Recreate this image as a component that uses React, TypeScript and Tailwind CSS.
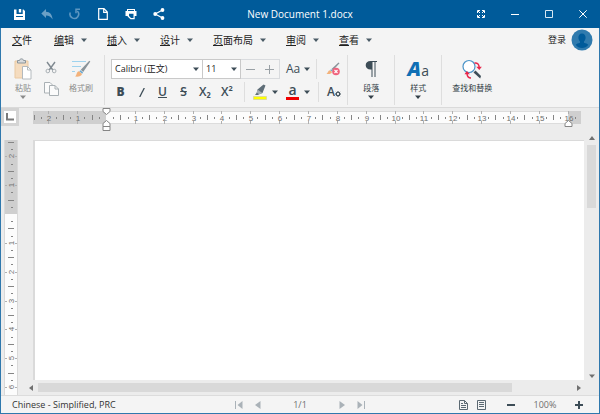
import React, { useLayoutEffect, useRef, useState } from "react";
import clsx from "clsx";

const CM = 28.85;

const MENUS = ["编辑", "插入", "设计", "页面布局", "审阅", "查看"];

interface IconButtonProps {
  label: string;
  className?: string;
  children: React.ReactNode;
}

function IconButton({ label, className, children }: IconButtonProps) {
  return (
    <button
      type="button"
      aria-label={label}
      className={clsx("flex shrink-0 items-center justify-center", className)}
    >
      {children}
    </button>
  );
}

function Caret({ className }: { className?: string }) {
  return (
    <svg
      width="6"
      height="4"
      viewBox="0 0 6 4"
      aria-hidden="true"
      className={clsx("shrink-0", className)}
    >
      <path d="M0 0.500h6L3 4z" fill="currentColor" />
    </svg>
  );
}

function Separator({ className }: { className?: string }) {
  return <div className={clsx("w-px shrink-0 bg-[#dedede]", className)} />;
}

function TitleBar() {
  return (
    <header className="grid h-7 shrink-0 grid-cols-[1fr_auto_1fr] items-center bg-[#005b9a] text-white">
      <div className="flex pl-[5px]">
        <IconButton label="保存" className="h-7 w-7">
          <svg width="11" height="11" viewBox="0 0 11 11">
            <path
              fill="#fff"
              fillRule="evenodd"
              d="M0 0.500h2.500v4.500h6.200V0.500H9.500L11 2v9H0zM4.800 0h2.400v3.600H4.800zM2 7v1h7V7z"
            />
          </svg>
        </IconButton>
        <IconButton label="撤销" className="h-7 w-7">
          <svg width="12" height="11" viewBox="0 0 12 11">
            <path
              fill="#6ba0c6"
              d="M5 0v2.700c4 0.200 6.300 2.800 6.600 7.800C10 7.600 8 6.500 5 6.400V9L0.300 4.500z"
            />
          </svg>
        </IconButton>
        <IconButton label="恢复" className="h-7 w-7">
          <svg width="12" height="12" viewBox="0 0 12 12" fill="none">
            <path
              stroke="#5d97c1"
              strokeWidth="1.600"
              d="M1.300 4.500a4.300 4.300 0 1 0 7-1.500"
            />
            <path stroke="#5d97c1" strokeWidth="1.500" d="M11 1.200H7v4" />
          </svg>
        </IconButton>
        <IconButton label="新建" className="h-7 w-7">
          <svg width="10" height="12" viewBox="0 0 10 12" fill="none">
            <path
              stroke="#fff"
              strokeWidth="1.200"
              d="M.7.700h5.300L9.300 4v7.300H.7zM5.700.700V4.300h3.600"
            />
          </svg>
        </IconButton>
        <IconButton label="打印" className="h-7 w-7">
          <svg width="12" height="12" viewBox="0 0 12 12">
            <path
              fill="#fff"
              fillRule="evenodd"
              d="M2 1h8v2h1.500v5H9.700v3.300H5.500L2.600 8.500V8H.5V3H2zM3 2v1h6V2zM4 5.800V8l2 2h2.500V5.800z"
            />
          </svg>
        </IconButton>
        <IconButton label="共享" className="h-7 w-7">
          <svg width="12" height="12" viewBox="0 0 12 12">
            <path stroke="#fff" strokeWidth="1.200" fill="none" d="M9.500 2L2.200 6l7.300 4" />
            <circle cx="9.500" cy="2" r="1.900" fill="#fff" />
            <circle cx="2.200" cy="6" r="1.900" fill="#fff" />
            <circle cx="9.500" cy="10" r="1.900" fill="#fff" />
          </svg>
        </IconButton>
      </div>
      <h1 className="text-[10px]">New Document 1.docx</h1>
      <div className="flex justify-end">
        <IconButton label="全屏" className="h-7 w-[34px]">
          <svg width="8" height="8" viewBox="0 0 8 8" fill="none" stroke="#fff">
            <path d="M.5 3V.500H3M5 .500h2.500V3M7.500 5v2.500H5M3 7.500H.5V5" />
            <path d="M1 1l2 2M7 1L5 3M7 7L5 5M1 7l2-2" />
          </svg>
        </IconButton>
        <IconButton label="最小化" className="h-7 w-[34px]">
          <svg width="8" height="8" viewBox="0 0 8 8">
            <path d="M0 4.500h8" stroke="#fff" />
          </svg>
        </IconButton>
        <IconButton label="最大化" className="h-7 w-[34px]">
          <svg width="8" height="8" viewBox="0 0 8 8" fill="none">
            <path d="M.5.500h7v7h-7z" stroke="#d9e8f3" />
          </svg>
        </IconButton>
        <IconButton label="关闭" className="h-7 w-[34px]">
          <svg width="8" height="8" viewBox="0 0 8 8">
            <path d="M.3.300l7.400 7.400M7.700.300L.3 7.700" stroke="#fff" />
          </svg>
        </IconButton>
      </div>
    </header>
  );
}

function MenuBar() {
  return (
    <nav className="flex h-6 shrink-0 items-center pl-[11px] pr-1.5 text-[10px] text-[#222]">
      <button type="button" className="mr-[22px]">
        <u>文</u>件
      </button>
      <div className="flex flex-1 gap-5">
        {MENUS.map((name) => (
          <button key={name} type="button" className="flex items-center gap-[7px]">
            <span>
              <u>{name[0]}</u>
              {name.slice(1)}
            </span>
            <Caret className="text-[#4a5b66]" />
          </button>
        ))}
      </div>
      <button type="button" className="flex items-center gap-[5px] text-[9px]">
        登录
        <svg width="22" height="22" viewBox="0 0 22 22" aria-hidden="true">
          <circle cx="11" cy="11" r="10.500" fill="#307bae" />
          <path
            fill="#005b9a"
            d="M11 4.500c2.300 0 3.600 1.700 3.600 4 0 1.700-.7 3-1.600 3.900v1.300c1.900.500 3.500 1 4.300 2.100A8 8 0 0 1 11 19a8 8 0 0 1-6.300-3.200c.8-1.100 2.400-1.600 4.300-2.100v-1.300c-.9-.900-1.600-2.200-1.600-3.900 0-2.300 1.300-4 3.600-4z"
          />
        </svg>
      </button>
    </nav>
  );
}

interface BigButtonProps {
  label: string;
  caret?: boolean;
  className?: string;
  children: React.ReactNode;
}

function BigButton({ label, caret, className, children }: BigButtonProps) {
  return (
    <button
      type="button"
      className={clsx(
        "flex h-[50px] shrink-0 flex-col items-center text-[8px] leading-3",
        className,
      )}
    >
      <span className="flex h-[27px] items-center">{children}</span>
      <span className="whitespace-nowrap">{label}</span>
      {caret && <Caret className="mt-px" />}
    </button>
  );
}

function ClipboardGroup() {
  return (
    <div className="flex gap-[9px] text-[#8b8b8b]">
      <BigButton label="粘贴" caret className="w-[22px]">
        <svg width="18" height="22" viewBox="0 0 18 22" fill="none">
          <path d="M1 3h13v17H1z" fill="#f5dcbf" stroke="#eac9a2" />
          <path d="M3.500 5V2.500h2C5.700.300 9.300.300 9.500 2.500h2V5z" fill="#d7dadc" stroke="#8d969c" />
          <path d="M8.500 8.500h5l3.500 3.500v9H8.500z" fill="#fff" stroke="#b4babe" />
          <path d="M13.500 8.500V12H17" stroke="#b4babe" />
        </svg>
      </BigButton>
      <div className="flex flex-col items-center gap-1.5 pt-1">
        <IconButton label="剪切" className="h-4 w-4">
          <svg width="12" height="13" viewBox="0 0 12 13" fill="none">
            <path d="M2 1l5.800 8M10 1L4.200 9" stroke="#7f8990" strokeWidth="1.400" />
            <circle cx="2.800" cy="10" r="1.800" stroke="#a9b0b5" />
            <circle cx="9.200" cy="10" r="1.800" stroke="#a9b0b5" />
          </svg>
        </IconButton>
        <IconButton label="复制" className="h-4 w-4">
          <svg width="15" height="14" viewBox="0 0 15 14" fill="#fbfbfb" stroke="#a9b0b4">
            <path d="M.5.500h5.500l2.500 2.500v8H.5z" />
            <path d="M5.500 3.500h5.500l3.500 3.500v6.500H5.500z" />
            <path d="M11 3.500V7h3.500" fill="none" />
          </svg>
        </IconButton>
      </div>
      <BigButton label="格式刷" className="w-[26px]">
        <svg width="20" height="18" viewBox="0 0 20 18" fill="none">
          <path d="M1 1.500h14M1 6.500h9M1 11.500h3" stroke="#9fd3ee" />
          <path d="M19.300 1.500l-1-.7-8.500 9 2.400 2.300z" fill="#8a949a" />
          <path d="M9.500 10.200l2.600 2.400-1 1.200-2.900-2.500z" fill="#69a9d2" />
          <path d="M8 11.300l3 2.700c-.8 2.500-3.500 3-7 2.600 2-1.300 1.300-4.800 4-5.300z" fill="#f3b27b" />
        </svg>
      </BigButton>
    </div>
  );
}

function FontGroup() {
  return (
    <div className="flex flex-col gap-px pt-1 text-[#3d4d57]">
      <div className="flex h-5 items-center">
        <div className="relative">
          <select
            aria-label="字体"
            className="block h-5 w-[92px] appearance-none border border-[#c9c9c9] bg-white pl-[3px] text-[9px] text-[#222]"
          >
            <option>Calibri (正文)</option>
          </select>
          <Caret className="pointer-events-none absolute right-1 top-2" />
        </div>
        <div className="relative -ml-px">
          <select
            aria-label="字号"
            className="block h-5 w-[39px] appearance-none border border-[#c9c9c9] bg-white pl-[3px] text-[9px] text-[#222]"
          >
            <option>11</option>
          </select>
          <Caret className="pointer-events-none absolute right-1 top-2" />
        </div>
        <div className="-ml-px flex h-5 w-10 items-center border border-[#d9dbde]">
          <IconButton label="减小字号" className="flex-1">
            <svg width="9" height="9" viewBox="0 0 9 9">
              <path d="M0 4.500h9" stroke="#9aa1a6" />
            </svg>
          </IconButton>
          <IconButton label="增大字号" className="flex-1">
            <svg width="9" height="9" viewBox="0 0 9 9">
              <path d="M0 4.500h9M4.500 0v9" stroke="#9aa1a6" />
            </svg>
          </IconButton>
        </div>
        <button
          type="button"
          aria-label="更改大小写"
          className="ml-1.5 flex items-center gap-1 text-[12px]"
        >
          Aa
          <Caret />
        </button>
        <Separator className="ml-1.5 h-5" />
        <IconButton label="清除格式" className="ml-2 h-5 w-4">
          <svg width="14" height="14" viewBox="0 0 14 14">
            <path d="M12.500.500l1 .7-6.500 7L5.500 7z" fill="#8a949a" />
            <path d="M5 7.200l2 1.600-.9 1-2-1.500z" fill="#69a9d2" />
            <path d="M4 8.300l2 1.700c-.6 1.800-2.500 2.300-5.500 1.900C2 11 2 8.600 4 8.300z" fill="#f3b27b" />
            <circle cx="10" cy="9.500" r="3.800" fill="#f0627c" />
            <path d="M8.500 8l3 3M11.500 8l-3 3" stroke="#fff" strokeWidth="1.100" />
          </svg>
        </IconButton>
      </div>
      <div className="flex h-6 items-center text-[12px]">
        <div className="-ml-px flex shrink-0">
          <button type="button" aria-label="粗体" className="w-[21px] font-extrabold">
            B
          </button>
          <IconButton label="斜体" className="w-[21px]">
            <svg width="6" height="9" viewBox="0 0 6 9">
              <path d="M5.300 0L.7 9" stroke="currentColor" strokeWidth="1.300" />
            </svg>
          </IconButton>
          <button type="button" aria-label="下划线" className="w-[21px] font-semibold underline">
            U
          </button>
          <button type="button" aria-label="删除线" className="w-[21px] font-semibold line-through">
            S
          </button>
          <button type="button" aria-label="下标" className="w-[22px] font-semibold">
            X₂
          </button>
          <button type="button" aria-label="上标" className="w-[22px] font-semibold">
            X²
          </button>
        </div>
        <Separator className="ml-1.5 h-5" />
        <button type="button" aria-label="突出显示" className="ml-2 flex items-center gap-1">
          <svg width="15" height="16" viewBox="0 0 15 16">
            <path d="M12.500 1.500L10.500.500 4.500 5.500l-.8 3.200L2 11h3l1.200-.8L9.500 9z" fill="#5f6e78" />
            <path d="M4.500 5.500l4.800 3.600L6.200 10.200 3.700 8.700z" fill="#a5afb5" />
            <path d="M.5 12.500h13v3H.5z" fill="#ff0" stroke="#dcdc9a" />
          </svg>
          <Caret />
        </button>
        <button type="button" aria-label="字体颜色" className="ml-2 flex items-center gap-[5px]">
          <span className="flex h-4 w-[13px] items-end justify-center border-b-[3px] border-[#f00000] text-[14px] font-semibold leading-[14px]">
            a
          </span>
          <Caret />
        </button>
        <Separator className="ml-2 h-5" />
        <button type="button" aria-label="字符格式" className="ml-2 flex items-end font-semibold">
          A
          <svg width="6" height="6" viewBox="0 0 6 6" fill="none" className="mb-1">
            <circle cx="3" cy="3" r="1.700" stroke="currentColor" strokeWidth="1.100" />
            <path
              d="M3 0v1M3 5v1M0 3h1M5 3h1M.9.900l.7.700M4.400 4.400l.7.700M5.100.900l-.7.700M1.600 4.400l-.7.700"
              stroke="currentColor"
            />
          </svg>
        </button>
      </div>
    </div>
  );
}

function Toolbar() {
  return (
    <div className="flex h-14 shrink-0 border-b border-[#dadada] pl-[11px] pt-[3px]">
      <ClipboardGroup />
      <Separator className="ml-[10px] mr-1.5 h-[50px]" />
      <FontGroup />
      <Separator className="ml-1.5 h-[50px]" />
      <BigButton label="段落" caret className="w-[46px] text-[#333f47]">
        <svg width="12" height="16" viewBox="0 0 12 16">
          <path
            fill="#3d4d57"
            d="M5.500 0H12v1h-1.500v15h-1V1H7.500v15h-1V8.500H5.500C2.500 8.500.7 6.800.7 4.300S2.500 0 5.500 0z"
          />
        </svg>
      </BigButton>
      <Separator className="h-[50px]" />
      <BigButton label="样式" caret className="w-[46px] text-[#333f47]">
        <span className="flex items-baseline leading-none">
          <span className="text-[20px] font-extrabold italic text-[#0f6fb5]">A</span>
          <span className="text-[14px] text-[#3d4d57]">a</span>
        </span>
      </BigButton>
      <Separator className="h-[50px]" />
      <BigButton label="查找和替换" className="w-[60px] text-[#333f47]">
        <svg width="20" height="20" viewBox="0 0 20 20" fill="none">
          <path d="M11.500 13.500l2-2 5.500 5.500-.8 2.500z" fill="#3d4d57" />
          <circle cx="7" cy="7.500" r="6" fill="#fff" stroke="#4a94c8" strokeWidth="1.200" />
          <path d="M12.500 4c2.700-.5 4.500 1 4.700 4.500" stroke="#e8274b" strokeWidth="1.500" />
          <path d="M14.300 7.800h5.500L17.300 11z" fill="#e8274b" />
          <path d="M5 14.500c.2 3 1.500 4.500 4 4.500" stroke="#e8274b" strokeWidth="1.500" />
          <path d="M2.500 15.300h5.500L4.800 12z" fill="#e8274b" />
        </svg>
      </BigButton>
    </div>
  );
}

// quarter-centimetre steps between two positions, zero being the margin
function steps(from: number, to: number) {
  const list: number[] = [];
  for (let q = from * 4; q <= to * 4; q++) list.push(q / 4);
  return list;
}

function HorizontalRuler() {
  const zero = 73;
  const end = zero + Math.round(16 * CM);
  return (
    <svg className="h-6 min-w-0 flex-1" aria-label="标尺" role="img">
      <rect y="3" width="100%" height="13" fill="#cfcfcf" />
      <rect x={zero} y="3" width={end - zero} height="13" fill="#fcfcfc" />
      <path d={`M${zero} 3.500H${end}M${zero} 15.500H${end}`} stroke="#dcdcdc" />
      {steps(-2.5, 16.25).map((v) => {
        if (v === 0) return null;
        const x = zero + Math.round(v * CM);
        if (Number.isInteger(v)) {
          return (
            <g key={v}>
              <path d={`M${x + 0.5} 3v3M${x + 0.5} 13v3`} stroke="#b0b0b0" />
              <text x={x + 1} y="13" textAnchor="middle" fontSize="8" fill="#6f6f6f">
                {Math.abs(v)}
              </text>
            </g>
          );
        }
        const half = (v * 2) % 1 === 0;
        return (
          <path
            key={v}
            d={half ? `M${x + 0.5} 7v5` : `M${x + 0.5} 9v2`}
            stroke="#858585"
          />
        );
      })}
      <g fill="#fff" stroke="#858585">
        <path d={`M${zero - 3} .5h7v3l-3.500 3-3.500-3z`} />
        <path d={`M${zero - 3} 18.500v-3l3.500-3 3.500 3v3zM${zero - 3} 18.500h7v4h-7z`} />
        <path d={`M${end - 3} 18.500v-3l3.500-3 3.500 3v3z`} />
      </g>
    </svg>
  );
}

function VerticalRuler() {
  const zero = 74;
  const ref = useRef<HTMLDivElement>(null);
  const [height, setHeight] = useState(0);

  useLayoutEffect(() => {
    const measure = () => setHeight(ref.current?.clientHeight ?? 0);
    measure();
    window.addEventListener("resize", measure);
    return () => window.removeEventListener("resize", measure);
  }, []);

  const last = Math.max(0, Math.floor(((height - 4 - zero) / CM) * 4) / 4);

  return (
    <div
      ref={ref}
      className="w-3.5 shrink-0 overflow-hidden border-x border-[#d9d9d9] bg-[#fcfcfc]"
    >
      <svg width="12" height={height} aria-label="垂直标尺" role="img" className="block">
        <rect width="12" height={zero} fill="#cfcfcf" />
        {steps(-2.5, last).map((v) => {
          if (v === 0) return null;
          const y = zero + Math.round(v * CM);
          if (Number.isInteger(v)) {
            return (
              <g key={v}>
                <path d={`M0 ${y + 0.5}h2M10 ${y + 0.5}h2`} stroke="#b0b0b0" />
                <text
                  transform={`translate(9 ${y}) rotate(-90)`}
                  textAnchor="middle"
                  fontSize="8"
                  fill="#6f6f6f"
                >
                  {Math.abs(v)}
                </text>
              </g>
            );
          }
          const half = (v * 2) % 1 === 0;
          return (
            <path
              key={v}
              d={half ? `M3 ${y + 0.5}h6` : `M6 ${y + 0.5}h2`}
              stroke="#858585"
            />
          );
        })}
      </svg>
    </div>
  );
}

function Workspace() {
  return (
    <main className="flex min-h-0 flex-1 flex-col bg-[#ececec] font-['Liberation_Sans',sans-serif]">
      <div className="flex shrink-0 pb-2 pr-[18px]">
        <div className="mr-[14px] h-[18px] w-[18px] shrink-0 bg-[#d4d4d4] p-[3px]">
          <IconButton label="制表符" className="h-3 w-3 bg-white">
            <svg width="8" height="8" viewBox="0 0 8 8" fill="none">
              <path d="M1 0v6.500h7" stroke="#7a7a7a" strokeWidth="2" />
            </svg>
          </IconButton>
        </div>
        <HorizontalRuler />
      </div>
      <div className="flex min-h-0 flex-1 pl-[3px]">
        <VerticalRuler />
        <div className="ml-[11px] flex min-w-0 flex-1 flex-col">
          <div
            role="textbox"
            aria-label="文档"
            className="ml-1 min-h-0 flex-1 border-l-2 border-t border-[#dadada] bg-white"
          />
          <div className="flex h-[15px] shrink-0 items-center">
            <svg width="4" height="6" viewBox="0 0 4 6" aria-hidden="true">
              <path d="M4 0v6L0 3z" fill="#707070" />
            </svg>
            <div className="ml-[5px] flex flex-1">
              <div className="h-[9px] w-[88%] bg-[#d9d9d9]" />
            </div>
            <svg width="4" height="6" viewBox="0 0 4 6" aria-hidden="true" className="mr-[3px]">
              <path d="M0 0v6l4-3z" fill="#707070" />
            </svg>
          </div>
        </div>
        <div className="flex w-[15px] shrink-0 flex-col items-center pb-[17px]">
          <div className="flex min-h-0 flex-1 flex-col items-center">
            <svg width="6" height="4" viewBox="0 0 6 4" aria-hidden="true" className="-mt-1">
              <path d="M0 4h6L3 0z" fill="#707070" />
            </svg>
            <div className="mt-[5px] h-[27%] w-[9px] bg-[#d9d9d9]" />
          </div>
          <Caret className="text-[#707070]" />
        </div>
      </div>
    </main>
  );
}

function StatusBar() {
  return (
    <footer className="grid h-[18px] shrink-0 grid-cols-[1fr_auto_1fr] items-center border-t border-[#dcdcdc] text-[9px] text-[#333]">
      <span className="pl-[11px]">Chinese - Simplified, PRC</span>
      <div className="flex items-center text-[#aab2b8]">
        <IconButton label="第一页">
          <svg width="8" height="8" viewBox="0 0 8 8">
            <path d="M.5 0v8" stroke="currentColor" />
            <path d="M7.500 0v8L2.500 4z" fill="currentColor" />
          </svg>
        </IconButton>
        <IconButton label="上一页" className="ml-3">
          <svg width="6" height="8" viewBox="0 0 6 8">
            <path d="M5.500 0v8L0 4z" fill="currentColor" />
          </svg>
        </IconButton>
        <span className="w-[78px] text-center text-[#6f6f6f]">1/1</span>
        <IconButton label="下一页" className="mr-3">
          <svg width="6" height="8" viewBox="0 0 6 8">
            <path d="M.5 0v8L6 4z" fill="currentColor" />
          </svg>
        </IconButton>
        <IconButton label="最后一页">
          <svg width="8" height="8" viewBox="0 0 8 8">
            <path d="M7.500 0v8" stroke="currentColor" />
            <path d="M.5 0v8L5.500 4z" fill="currentColor" />
          </svg>
        </IconButton>
      </div>
      <div className="flex items-center justify-end pr-4 text-[#3d4d57]">
        <IconButton label="页面视图" className="mr-[9px]">
          <svg width="9" height="10" viewBox="0 0 9 10" fill="none" stroke="#5b6972">
            <path d="M.5.500h5L8.500 3.500v6h-8z" />
            <path d="M5.500.500v3h3M2 5.500h5M2 7.500h5M2 3.500h2" />
          </svg>
        </IconButton>
        <IconButton label="连续视图">
          <svg width="9" height="10" viewBox="0 0 9 10" fill="none" stroke="#5b6972">
            <path d="M.5.500h8v9h-8z" />
            <path d="M2 2.500h5M2 4.500h5M2 6.500h5" />
          </svg>
        </IconButton>
        <IconButton label="缩小" className="ml-[21px]">
          <svg width="8" height="8" viewBox="0 0 8 8">
            <path d="M0 4h8" stroke="currentColor" strokeWidth="2" />
          </svg>
        </IconButton>
        <span className="w-[60px] text-center text-[#6f6f6f]">100%</span>
        <IconButton label="放大">
          <svg width="8" height="8" viewBox="0 0 8 8">
            <path d="M0 4h8M4 0v8" stroke="currentColor" strokeWidth="2" />
          </svg>
        </IconButton>
      </div>
    </footer>
  );
}

export default function App() {
  return (
    <div className="flex h-screen flex-col bg-[#005b9a] font-['Open_Sans','Noto_Sans_CJK_SC',sans-serif]">
      <TitleBar />
      <div className="flex min-h-0 flex-1 flex-col border-x border-b border-[#2f78ad] bg-[#f4f4f4]">
        <MenuBar />
        <Toolbar />
        <Workspace />
        <StatusBar />
      </div>
    </div>
  );
}
